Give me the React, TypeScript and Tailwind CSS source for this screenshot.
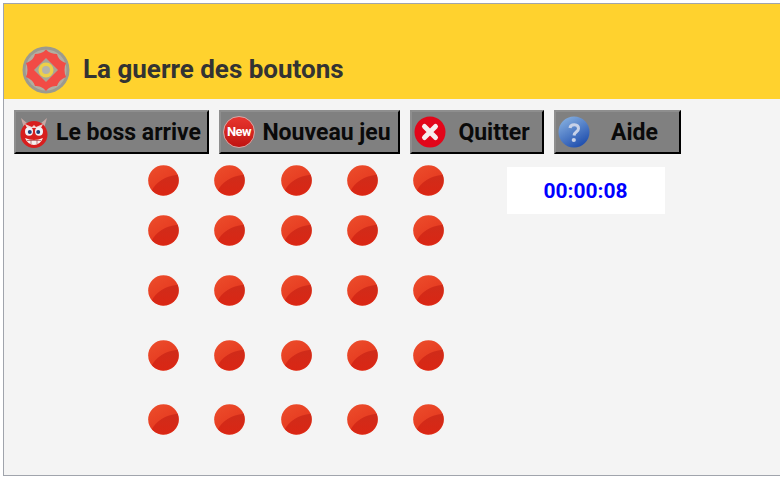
import React from 'react';

const rowGaps = ['mt-0', 'mt-[19px]', 'mt-[29px]', 'mt-[34px]', 'mt-[33px]'];
const columns = [0, 1, 2, 3, 4];

function Dot() {
  return (
    <svg viewBox="0 0 32 32" className="w-[31px] h-[31px] block shrink-0 blur-[0.5px]">
      <defs>
        <linearGradient id="dotLight" x1="0" y1="0" x2="0.6" y2="1">
          <stop offset="0" stopColor="#ec4e2c" />
          <stop offset="1" stopColor="#e4341c" />
        </linearGradient>
        <linearGradient id="dotDark" x1="0.5" y1="0" x2="0.5" y2="1">
          <stop offset="0" stopColor="#cf2c1a" />
          <stop offset="1" stopColor="#da2614" />
        </linearGradient>
      </defs>
      <circle cx="16" cy="16" r="15.8" fill="url(#dotLight)" />
      <path d="M4 26C8 18 18 11 30.6 10A15.8 15.8 0 0 1 4 26Z" fill="url(#dotDark)" />
    </svg>
  );
}

function Logo() {
  return (
    <svg viewBox="0 0 48 48" className="w-12 h-12 block shrink-0 blur-[0.5px]">
      <circle cx="24" cy="24" r="23.5" fill="#9c9a8e" />
      <circle cx="24" cy="24" r="20.5" fill="#b3aea0" />
      <path
        d="M24 3.5C27 7 31 8 35 8C36 12 38 15 44 17C42 21 42 27 44 31C39 33 36 36 35 40C31 40 27 41 24 45C21 41 17 40 13 40C12 36 9 33 4 31C6 27 6 21 4 17C10 15 12 12 13 8C17 8 21 7 24 3.5Z"
        fill="#f24b45"
      />
      <path d="M24 12L36 24L24 36L12 24Z" fill="#a9a595" />
      <circle cx="24" cy="24" r="7.5" fill="#ecd04a" />
      <circle cx="24" cy="24" r="4" fill="#b4b3aa" />
    </svg>
  );
}

function BossIcon() {
  return (
    <svg viewBox="0 0 32 32" className="w-8 h-8 block shrink-0 blur-[0.4px]">
      <path d="M3 2L10 8L6 12Z" fill="#c9a8a4" />
      <path d="M29 2L22 8L26 12Z" fill="#c9a8a4" />
      <circle cx="16" cy="18.5" r="13.5" fill="#d81e1e" />
      <path d="M7 8L14 11L16 9L18 11L25 8L23 12L9 12Z" fill="#f2d8d4" />
      <ellipse cx="11" cy="15.5" rx="4" ry="4.2" fill="#f0f2f8" />
      <ellipse cx="21" cy="15.5" rx="4" ry="4.2" fill="#f0f2f8" />
      <circle cx="11.8" cy="16" r="2" fill="#1f3f7a" />
      <circle cx="20.2" cy="16" r="2" fill="#1f3f7a" />
      <path d="M7 22Q16 26 25 22Q22 29 16 29Q10 29 7 22Z" fill="#f6f0ee" />
      <path d="M9 24.5H23M13 23.5V28M19 23.5V28" stroke="#a8484a" strokeWidth="0.7" />
    </svg>
  );
}

function NewIcon() {
  return (
    <div className="w-8 h-8 shrink-0 rounded-full bg-gradient-to-b from-[#e8352e] to-[#c01210] border border-[#d8a8a6] flex items-center justify-center">
      <span className="text-white text-[13px] font-bold tracking-[-0.5px]">New</span>
    </div>
  );
}

function QuitIcon() {
  return (
    <svg viewBox="0 0 32 32" className="w-8 h-8 block shrink-0 blur-[0.3px]">
      <circle cx="16" cy="16" r="15.5" fill="#e2061a" />
      <path d="M10.5 10.5L21.5 21.5M21.5 10.5L10.5 21.5" stroke="#f6eeee" strokeWidth="5" strokeLinecap="round" />
    </svg>
  );
}

function HelpIcon() {
  return (
    <svg viewBox="0 0 32 32" className="w-8 h-8 block shrink-0 blur-[0.4px]">
      <defs>
        <linearGradient id="helpBlue" x1="0" y1="0" x2="0.6" y2="1">
          <stop offset="0" stopColor="#8fb8e4" />
          <stop offset="1" stopColor="#2352b0" />
        </linearGradient>
      </defs>
      <circle cx="16" cy="16" r="15.5" fill="url(#helpBlue)" />
      <path d="M12 12C12.5 7.5 20.5 7.5 20.5 12.5C20.5 16 16.5 15.5 16 19.5" fill="none" stroke="#c8d2e8" strokeWidth="3" />
      <circle cx="15.8" cy="24" r="2.1" fill="#c8d2e8" />
    </svg>
  );
}

function GameButton({ icon, label, width, gap }: { icon: React.ReactNode; label: string; width: string; gap: string }) {
  return (
    <button
      className={`${width} ${gap} h-11 shrink-0 flex items-center pl-[2px] bg-[#808080] border-2 border-t-[#8e8e8e] border-l-[#8e8e8e] border-r-black border-b-black text-[23px] font-bold text-[#0a0a0a] whitespace-nowrap`}
    >
      {icon}
      <span className="flex-1 text-center pt-[3px]">{label}</span>
    </button>
  );
}

export default function App() {
  return (
    <div className="w-[780px] h-[480px] bg-white overflow-hidden font-['Roboto',sans-serif] pt-[3px] pb-1 pl-[3px]">
      <div className="h-full bg-[#f4f4f4] border-t border-l border-b border-[#a0a4ac] flex flex-col">
        {/* Header */}
        <div className="h-[95px] shrink-0 bg-[#ffd22e] flex items-end pl-[18px] pb-[5px] gap-[13px]">
          <Logo />
          <h1 className="text-[26px] leading-[50px] font-bold text-[#333333]">La guerre des boutons</h1>
        </div>

        {/* Toolbar */}
        <div className="flex pl-[10px] mt-[11px]">
          <GameButton icon={<BossIcon />} label="Le boss arrive" width="w-[195px]" gap="" />
          <GameButton icon={<NewIcon />} label="Nouveau jeu" width="w-[181px]" gap="ml-[10px]" />
          <GameButton icon={<QuitIcon />} label="Quitter" width="w-[134px]" gap="ml-[10px]" />
          <GameButton icon={<HelpIcon />} label="Aide" width="w-[127px]" gap="ml-[10px]" />
        </div>

        {/* Board and timer */}
        <div className="flex">
          <div className="ml-[144px] mt-[11px] w-[296px]">
            {rowGaps.map((rowGap, row) => (
              <div key={row} className={`${rowGap} flex justify-between`}>
                {columns.map((col) => (
                  <Dot key={col} />
                ))}
              </div>
            ))}
          </div>
          <div className="ml-[63px] mt-[13px] w-[158px] h-[47px] pt-[2px] pr-[1px] bg-white flex items-center justify-center text-[21px] font-bold text-[#0000ff]">
            00:00:08
          </div>
        </div>
      </div>
    </div>
  );
}
